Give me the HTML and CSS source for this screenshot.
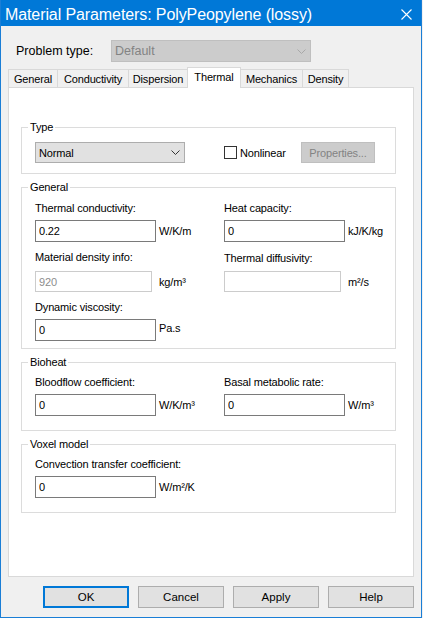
FILE: index.html
```html
<!DOCTYPE html>
<html lang="en">
<head>
<meta charset="utf-8">
<title>Material Parameters</title>
<link rel="stylesheet" href="styles.css">
</head>
<body>
<div class="dialog">
  <div class="titlebar">
    <span class="title">Material Parameters: PolyPeopylene (lossy)</span>
    <svg class="close" width="11" height="11" viewBox="0 0 11 11"><path d="M0.5 0.5L10.5 10.5M10.5 0.5L0.5 10.5" stroke="#ffffff" stroke-width="1.1" fill="none"/></svg>
  </div>
  <div class="body">
    <div class="problem-row">
      <span class="problem-label">Problem type:</span>
      <div class="combo combo-problem">
        <span>Default</span>
        <svg class="chevron" width="9" height="5" viewBox="0 0 9 5"><path d="M0.5 0.5L4.5 4.5L8.5 0.5" stroke="#a8a8a8" stroke-width="1" fill="none"/></svg>
      </div>
    </div>
    <div class="tabs">
      <div class="tab tab-general">General</div>
      <div class="tab tab-conductivity">Conductivity</div>
      <div class="tab tab-dispersion">Dispersion</div>
      <div class="tab tab-thermal tab-active">Thermal</div>
      <div class="tab tab-mechanics">Mechanics</div>
      <div class="tab tab-density">Density</div>
    </div>
    <div class="panel">
      <fieldset class="group">
        <legend>Type</legend>
        <div class="type-row">
          <div class="combo combo-normal">
            <span>Normal</span>
            <svg class="chevron" width="9" height="5" viewBox="0 0 9 5"><path d="M0.5 0.5L4.5 4.5L8.5 0.5" stroke="#333333" stroke-width="1" fill="none"/></svg>
          </div>
          <div class="check">
            <span class="checkbox"></span>
            <span>Nonlinear</span>
          </div>
          <div class="btn-disabled">Properties...</div>
        </div>
      </fieldset>
      <fieldset class="group">
        <legend>General</legend>
        <div class="fields fields-general">
          <div class="field">
            <div class="field-label">Thermal conductivity:</div>
            <div class="field-input"><input class="textbox" value="0.22" readonly><span class="unit">W/K/m</span></div>
          </div>
          <div class="field">
            <div class="field-label">Heat capacity:</div>
            <div class="field-input"><input class="textbox" value="0" readonly><span class="unit">kJ/K/kg</span></div>
          </div>
          <div class="field">
            <div class="field-label field-label-loose">Material density info:</div>
            <div class="field-input field-input-short"><input class="textbox textbox-disabled" value="920" readonly><span class="unit">kg/m³</span></div>
          </div>
          <div class="field">
            <div class="field-label field-label-loose field-label-low">Thermal diffusivity:</div>
            <div class="field-input field-input-short"><input class="textbox textbox-disabled" value="" readonly><span class="unit">m²/s</span></div>
          </div>
          <div class="field">
            <div class="field-label">Dynamic viscosity:</div>
            <div class="field-input"><input class="textbox" value="0" readonly><span class="unit unit-high">Pa.s</span></div>
          </div>
        </div>
      </fieldset>
      <fieldset class="group">
        <legend>Bioheat</legend>
        <div class="fields fields-compact">
          <div class="field">
            <div class="field-label">Bloodflow coefficient:</div>
            <div class="field-input"><input class="textbox" value="0" readonly><span class="unit">W/K/m³</span></div>
          </div>
          <div class="field">
            <div class="field-label">Basal metabolic rate:</div>
            <div class="field-input"><input class="textbox" value="0" readonly><span class="unit">W/m³</span></div>
          </div>
        </div>
      </fieldset>
      <fieldset class="group">
        <legend>Voxel model</legend>
        <div class="fields fields-compact">
          <div class="field">
            <div class="field-label">Convection transfer coefficient:</div>
            <div class="field-input"><input class="textbox" value="0" readonly><span class="unit">W/m²/K</span></div>
          </div>
        </div>
      </fieldset>
    </div>
    <div class="buttons">
      <button class="btn btn-default">OK</button>
      <button class="btn">Cancel</button>
      <button class="btn">Apply</button>
      <button class="btn">Help</button>
    </div>
  </div>
</div>
</body>
</html>
```
FILE: styles.css
```css
* { box-sizing: border-box; }
html, body { margin: 0; padding: 0; }
body {
  width: 423px;
  height: 618px;
  overflow: hidden;
  background: #f0f0f0;
  font-family: "Liberation Sans", Arial, sans-serif;
  font-size: 11px;
  letter-spacing: -0.15px;
  color: #000;
}
.dialog {
  width: 422px;
  height: 618px;
  border: 1px solid #1a7ed6;
  border-top: none;
  background: #f0f0f0;
  display: flex;
  flex-direction: column;
}
.titlebar {
  flex: none;
  height: 26px;
  background: #0078d7;
  color: #fff;
  display: flex;
  justify-content: space-between;
  align-items: flex-start;
  padding: 0 9px 0 4px;
}
.title {
  font-size: 16px;
  line-height: 18px;
  padding-top: 6px;
  letter-spacing: -0.1px;
  white-space: nowrap;
}
.close { margin-top: 9px; }
.body {
  flex: 1;
  display: flex;
  flex-direction: column;
  padding: 14px 7px 0 7px;
}
.problem-row {
  display: flex;
  align-items: center;
  height: 22px;
  padding-left: 8px;
}
.problem-label {
  flex: none;
  width: 95px;
  font-size: 12.5px;
  letter-spacing: 0;
}
.combo {
  display: flex;
  align-items: center;
  justify-content: space-between;
  border: 1px solid #adadad;
  background: #e1e1e1;
  padding: 0 4px 0 3px;
}
.combo-problem {
  width: 200px;
  height: 22px;
  background: #cccccc;
  border-color: #bfbfbf;
  color: #838383;
  font-size: 12.5px;
  letter-spacing: 0;
  padding-right: 4px;
}
.combo-normal {
  width: 150px;
  height: 21px;
}
.tabs {
  display: flex;
  align-items: flex-end;
  height: 21px;
  margin-top: 5px;
  margin-bottom: -1px;
  position: relative;
  z-index: 1;
}
.tab {
  height: 19px;
  border: 1px solid #d9d9d9;
  margin-left: -1px;
  background: #f0f0f0;
  text-align: center;
  padding-top: 3px;
  line-height: 13px;
  white-space: nowrap;
}
.tab:first-child { margin-left: 0; }
.tab-general { width: 50px; }
.tab-conductivity { width: 72px; }
.tab-dispersion { width: 60px; }
.tab-thermal { width: 54px; }
.tab-mechanics { width: 63px; }
.tab-density { width: 47px; }
.tab-active {
  height: 21px;
  background: #fff;
  border-bottom: none;
}
.panel {
  flex: none;
  height: 490px;
  background: #fff;
  border: 1px solid #d9d9d9;
  padding: 33px 17px 0 12px;
}
.group {
  margin: 0;
  padding: 0;
  border: 1px solid #dcdcdc;
  min-width: 0;
}
.group + .group { margin-top: 7px; }
.group legend {
  margin-left: 6px;
  padding: 0 2px;
  line-height: 13px;
}
.type-row {
  display: flex;
  align-items: center;
  padding: 8px 0 10px 13px;
}
.check {
  display: flex;
  align-items: center;
  gap: 3px;
  width: 77px;
  margin-left: 39px;
}
.checkbox {
  width: 13px;
  height: 13px;
  border: 1px solid #333;
  background: #fff;
}
.btn-disabled {
  width: 74px;
  height: 21px;
  background: #cccccc;
  border: 1px solid #bfbfbf;
  color: #838383;
  display: flex;
  align-items: center;
  justify-content: center;
}
.fields {
  display: grid;
  grid-template-columns: 189px 1fr;
  row-gap: 9px;
  padding: 8px 0 7px 13px;
}
.fields-compact { padding: 7px 0 14px 13px; }
.field-label {
  line-height: 13px;
  margin-bottom: 5px;
  white-space: nowrap;
}
.field-label-loose { margin-bottom: 7px; }
.field-label-low { padding-top: 1px; margin-bottom: 6px; }
.field-input {
  display: grid;
  grid-template-columns: 124px auto;
  align-items: center;
  height: 22px;
}
.field-input-short { height: 21px; }
.textbox {
  width: 121px;
  height: 22px;
  margin: 0;
  border: 1px solid #7a7a7a;
  padding: 0 3px;
  font: inherit;
  letter-spacing: inherit;
  color: #000;
  background: #fff;
  outline: none;
}
.textbox-disabled {
  width: 117px;
  height: 21px;
  border-color: #cccccc;
  color: #8d8d8d;
}
.unit { white-space: nowrap; }
.unit-high { margin-top: -4px; }
.buttons {
  display: flex;
  justify-content: flex-end;
  gap: 9px;
  margin-top: 9px;
}
.btn {
  width: 86px;
  height: 22px;
  margin: 0;
  padding: 0;
  border: 1px solid #adadad;
  background: #e1e1e1;
  font-family: inherit;
  font-size: 11.5px;
  letter-spacing: 0;
  color: #000;
}
.btn-default { border: 2px solid #0078d7; }
```
